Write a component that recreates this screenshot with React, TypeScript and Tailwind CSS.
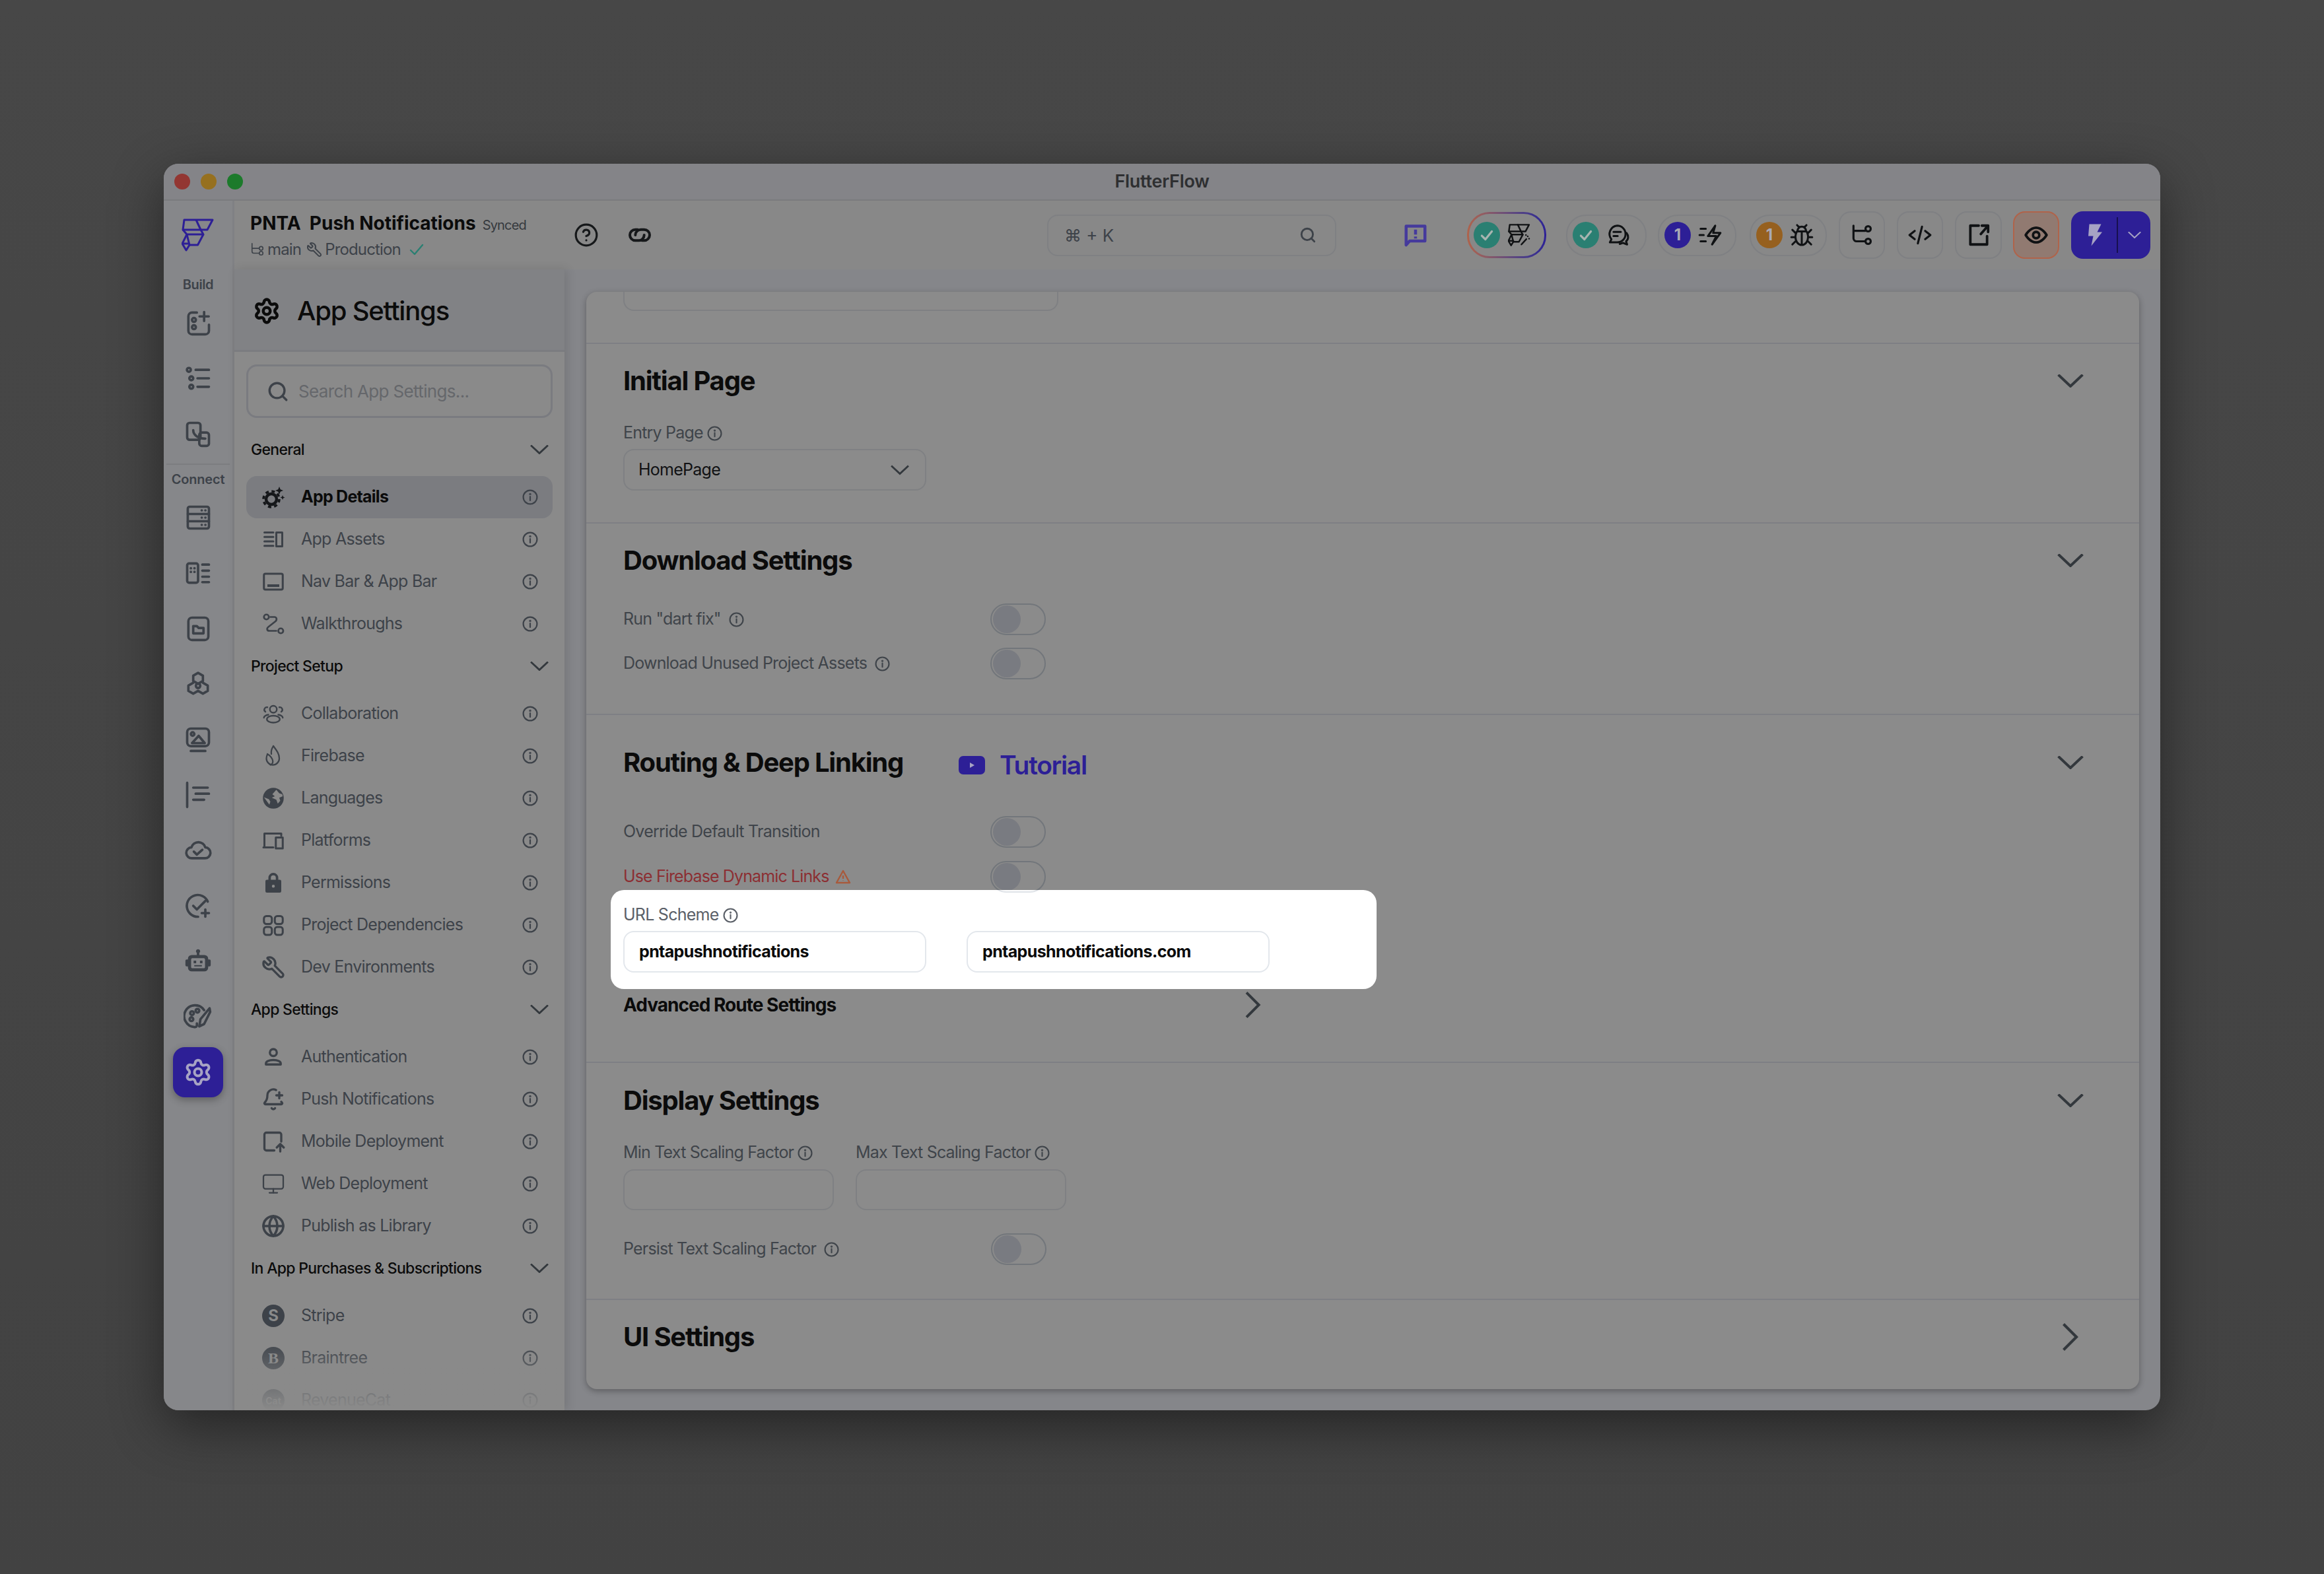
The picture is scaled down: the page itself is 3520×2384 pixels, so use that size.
import React from 'react';
import {
  BellPlus,
  CircleHelp,
  Globe,
  Monitor,
  Search,
  Settings,
  Wrench,
} from 'lucide-react';

type IconProps = { className?: string; w?: number };

const Svg = ({ className = 'w-[44px] h-[44px]', w = 2, children }: IconProps & { children: React.ReactNode }) => (
  <svg viewBox="0 0 24 24" fill="none" stroke="currentColor" strokeWidth={w} strokeLinecap="round" strokeLinejoin="round" className={className}>
    {children}
  </svg>
);

const Info = ({ className = 'w-[24px] h-[24px]' }: IconProps) => (
  <svg viewBox="0 0 24 24" fill="none" stroke="currentColor" strokeWidth={2.2} strokeLinecap="round" className={`${className} shrink-0`}>
    <circle cx="12" cy="12" r="10.4" />
    <path d="M12 11v6" />
    <circle cx="12" cy="7.4" r="0.6" fill="currentColor" />
  </svg>
);

const Caret = ({ className }: { className: string }) => (
  <svg viewBox="0 0 40 20" fill="none" stroke="currentColor" strokeWidth={4} strokeLinecap="square" className={className}>
    <path d="M3 2 20 18 37 2" />
  </svg>
);

const CaretRight = ({ className }: { className: string }) => (
  <svg viewBox="0 0 24 42" fill="none" stroke="currentColor" strokeWidth={4.2} strokeLinecap="square" className={className}>
    <path d="M3 3 21 21 3 39" />
  </svg>
);

const LogoPaths = () => (
  <>
    <path d="M4 2H47L39 17H2Z" />
    <path d="M22 2 29 17" />
    <path d="M2 17 8 24H33L29 17" />
    <path d="M33 24 24.5 40H12L8 24" />
    <path d="M8 24 1 38 7 48 12 40" />
    <path d="M1 38H12" />
  </>
);

const Logo = () => (
  <svg viewBox="0 0 50 50" fill="none" stroke="#2d1f96" strokeWidth={3} strokeLinejoin="round" className="w-[50px] h-[50px]">
    <LogoPaths />
  </svg>
);

const railTop = [
  <Svg key="a"><path d="M11 3.5H7A3 3 0 0 0 4 6.5v12a3 3 0 0 0 3 3h11a3 3 0 0 0 3-3v-5" /><circle cx="8.6" cy="9.6" r="1.6" /><circle cx="8.6" cy="15.6" r="1.6" /><path d="M17 3v7.5M13.2 6.7h7.6" /></Svg>,
  <Svg key="b"><circle cx="4.4" cy="5" r="1.6" /><circle cx="6.4" cy="12" r="1.6" /><circle cx="6.4" cy="19" r="1.6" /><path d="M10 5h11M11.5 12H21M11.5 19H21" /></Svg>,
  <Svg key="c"><rect x="3" y="3" width="11" height="14" rx="2" /><rect x="13" y="11" width="8" height="11" rx="2" /><path d="M8 9c0 4 4 7 10 7" /></Svg>,
];

const railConnect = [
  <Svg key="a"><rect x="3.5" y="3" width="17.5" height="18" rx="1.6" /><path d="M3.5 9h17.5M3.5 15h17.5M15 6h.1M18 6h.1M15 12h.1M18 12h.1M15 18h.1M18 18h.1" /></Svg>,
  <Svg key="b"><rect x="3" y="4" width="9" height="16" rx="1.6" /><path d="M6 8h.1M9 8h.1M6 11h.1M9 11h.1M15.5 5H21M15.5 10H21M15.5 15H21M15.5 19.5H21" /></Svg>,
  <Svg key="c"><rect x="4" y="3" width="16.5" height="18.5" rx="3" /><path d="M8 10h3l1.5 1.5H16.5V16H8z" /></Svg>,
  <Svg key="d"><path d="M12 2.8l4 2.3v4.4l-4 2.3-4-2.3V5.1z" /><path d="M8 11 4 13.3v4.4l4 2.3 4-2.3 4 2.3 4-2.3v-4.4L16 11" /><circle cx="12" cy="13.5" r="1.8" /></Svg>,
  <Svg key="e"><rect x="3" y="3" width="18" height="14.5" rx="3" /><circle cx="7.5" cy="7.5" r="1.4" /><path d="M7 15l5.5-6 5 6zM6 21.5h12" /></Svg>,
  <Svg key="f"><path d="M3 2v20M8 6h12M10 11h11M8 16h9" /></Svg>,
  <Svg key="g"><path d="M7 18.5a4.5 4.5 0 0 1-.5-9A6 6 0 0 1 18 9.5a4.5 4.5 0 0 1-.5 9z" /><path d="M8.5 13l2.5 2.5 4.5-4" /></Svg>,
  <Svg key="h"><path d="M20 8.5A9 9 0 1 0 12 21" /><path d="M8 12l3 3 7-7M18 15v6M15 18h6" /></Svg>,
  <svg key="i" viewBox="0 0 24 24" className="w-[46px] h-[46px]" fill="currentColor"><path fillRule="evenodd" d="M12 2.5a1.6 1.6 0 0 1 1 2.9V7h4a3 3 0 0 1 3 3v.5h1a1 1 0 0 1 1 1V15a1 1 0 0 1-1 1h-1v1a3 3 0 0 1-3 3H7a3 3 0 0 1-3-3v-1H3a1 1 0 0 1-1-1v-3.5a1 1 0 0 1 1-1h1V10a3 3 0 0 1 3-3h4V5.4a1.6 1.6 0 0 1 1-2.9zM7.5 9.5A1 1 0 0 0 6.5 10.5v6a1 1 0 0 0 1 1h9a1 1 0 0 0 1-1v-6a1 1 0 0 0-1-1zM8.5 11.5h2v2h-2zm5 0h2v2h-2zM9 15h6v1H9z" /></svg>,
  <Svg key="j"><path d="M17 6.5A9 9 0 1 0 9 20.5c2.500.5 2-2 2-3" /><circle cx="7" cy="9" r="1.5" /><circle cx="11.5" cy="7" r="1.5" /><circle cx="6.5" cy="14" r="1.5" /><path d="M21.5 5 14 14l-1 6 4-2 5-10z" /></Svg>,
];

type Item = { label: string; icon: React.ReactNode; active?: boolean };

const it = 'w-[36px] h-[36px]';

const groups: { title: string; items: Item[] }[] = [
  {
    title: 'General',
    items: [
      {
        label: 'App Details',
        active: true,
        icon: (
          <svg viewBox="0 0 36 36" className="w-[36px] h-[36px] text-[#15171a]" fill="none" stroke="currentColor">
            <circle cx="15" cy="21" r="8" strokeWidth={4.5} />
            <circle cx="15" cy="21" r="12" strokeWidth={3.6} strokeDasharray="5 4.42" />
            <path d="M27 2l1.7 4.3 4.3 1.7-4.3 1.7-1.7 4.3-1.7-4.3-4.3-1.7 4.3-1.7zM32 15l1 2.5 2.5 1-2.5 1-1 2.5-1-2.5-2.5-1 2.5-1z" fill="currentColor" stroke="none" />
          </svg>
        ),
      },
      { label: 'App Assets', icon: <Svg className={it}><path d="M3 5h9M3 9.5h9M3 14h9M3 18.5h9" /><rect x="15" y="5" width="6" height="14" /></Svg> },
      { label: 'Nav Bar & App Bar', icon: <Svg className={it}><rect x="2.5" y="4" width="19" height="16" rx="1.5" /><path d="M6 16h12" strokeWidth={2.6} strokeLinecap="butt" /></Svg> },
      { label: 'Walkthroughs', icon: <Svg className={it} w={1.8}><circle cx="5" cy="5" r="2.5" /><circle cx="19.5" cy="19" r="2.5" /><path d="M9 5h4c2.5 0 3 3 1 4.5L7 15c-2 1.5-1.5 4 1 4h7" /></Svg> },
    ],
  },
  {
    title: 'Project Setup',
    items: [
      { label: 'Collaboration', icon: <Svg className={it} w={1.6}><circle cx="12" cy="7.5" r="3.5" /><path d="M6 5.5a2.5 2.5 0 0 0-2 4.5M18 5.5a2.5 2.5 0 0 1 2 4.5M7 13c-2 .2-4.5 1.5-4.5 3M17 13c2 .2 4.5 1.5 4.5 3" /><ellipse cx="12" cy="17.5" rx="6.5" ry="3.5" /></Svg> },
      { label: 'Firebase', icon: <Svg className={it} w={1.5}><path d="M12 2c3 4 6 7.5 6 12.5a6.5 6.5 0 0 1-13 0c0-1.5.5-3 1-4" /><path d="M6 10c3 1.5 5.5 5 5.5 7.5 0 2-1 3-2.5 3.5M12 2c-2 3-2.5 5-2 8" /></Svg> },
      {
        label: 'Languages',
        icon: (
          <svg viewBox="0 0 24 24" className={it}>
            <circle cx="12" cy="12" r="10.5" fill="currentColor" />
            <path d="M2.5 11l5.5 7.500 1-3-1.500-2.500zM15 3.500l-4 4.500 2.500 2-3 1.500 4.500 2 1.500 4 2.500-3-1-3 3.500-1.500-.5-2-3-1z" fill="#8a8a8a" />
          </svg>
        ),
      },
      { label: 'Platforms', icon: <Svg className={it}><path d="M3 18V5h17v2M2 19h10" /><rect x="14.5" y="9" width="7" height="11" /></Svg> },
      { label: 'Permissions', icon: <svg viewBox="0 0 24 24" className={it} fill="currentColor"><path fillRule="evenodd" d="M7 9V7a5 5 0 0 1 10 0v2h1.5a1.5 1.5 0 0 1 1.5 1.5v10a1.5 1.5 0 0 1-1.5 1.5h-13A1.5 1.5 0 0 1 4 20.5v-10A1.5 1.5 0 0 1 5.5 9zm2.500 0h5V7a2.500 2.500 0 0 0-5 0zM12 14a1.500 1.500 0 1 0 0 3 1.500 1.500 0 0 0 0-3z" /></svg> },
      { label: 'Project Dependencies', icon: <Svg className={it}><rect x="2.5" y="3" width="8" height="8" rx="2.5" /><rect x="13.5" y="3" width="8" height="8" rx="2.5" /><rect x="2.5" y="14" width="8" height="8" rx="2.5" /><rect x="13.5" y="14" width="8" height="8" rx="2.5" /></Svg> },
      { label: 'Dev Environments', icon: <Wrench className={`${it} -scale-x-100`} strokeWidth={2.2} /> },
    ],
  },
  {
    title: 'App Settings',
    items: [
      { label: 'Authentication', icon: <Svg className={it} w={2.2}><circle cx="12" cy="7.5" r="3.5" /><path d="M4.5 19.5v-1c0-2 3-3.500 7.500-3.500s7.500 1.500 7.500 3.500v1z" /></Svg> },
      { label: 'Push Notifications', icon: <BellPlus className={it} strokeWidth={2.2} /> },
      { label: 'Mobile Deployment', icon: <Svg className={it} w={2.2}><path d="M13 21H5a2 2 0 0 1-2-2V5a2 2 0 0 1 2-2h13a2 2 0 0 1 2 2v7" /><path d="M19 22v-7M15.5 18l3.5-3.5 3.5 3.5" /></Svg> },
      { label: 'Web Deployment', icon: <Monitor className={it} strokeWidth={1.5} /> },
      { label: 'Publish as Library', icon: <Globe className={it} strokeWidth={2.4} /> },
    ],
  },
  {
    title: 'In App Purchases & Subscriptions',
    items: [
      { label: 'Stripe', icon: <span className="w-[34px] h-[34px] rounded-full bg-[#3d4249] text-[#8a8a8a] text-[24px] font-bold flex items-center justify-center">S</span> },
      { label: 'Braintree', icon: <span className="w-[34px] h-[34px] rounded-full bg-[#3d4249] text-[#8a8a8a] text-[24px] font-bold flex items-center justify-center font-[family-name:'Liberation_Serif',serif]">B</span> },
      { label: 'RevenueCat', icon: <span className="w-[34px] h-[34px] rounded-full bg-[#3d4249] text-[#8a8a8a] text-[14px] font-bold flex items-center justify-center">Cat</span> },
    ],
  },
];

const Toggle = () => (
  <div className="w-[84px] h-[48px] rounded-full border-2 border-[#72767b] flex items-center pl-[2px]">
    <div className="w-[42px] h-[42px] rounded-full bg-[#797b81]" />
  </div>
);

const Label = ({ children, gap = 'ml-[6px]' }: { children: React.ReactNode; gap?: string }) => (
  <div className="h-[30px] flex items-center text-[25px] tracking-[-0.032em] text-[#3f444a]">
    <span>{children}</span>
    <Info className={`w-[23px] h-[23px] ${gap}`} />
  </div>
);

const Heading = ({ children }: { children: React.ReactNode }) => (
  <div className="h-[48px] flex items-center text-[40px] font-bold tracking-[-0.03em] text-[#0b0b0b]">{children}</div>
);

const Section = ({ title, open = true, extra }: { title: string; open?: boolean; extra?: React.ReactNode }) => (
  <div className="flex items-center justify-between">
    <div className="flex items-center">
      <Heading>{title}</Heading>
      {extra}
    </div>
    <div className="w-[40px] flex justify-center text-[#33383d]">
      {open ? <Caret className="w-[40px] h-[20px]" /> : <CaretRight className="w-[24px] h-[42px]" />}
    </div>
  </div>
);

const Pill = ({ w, children }: { w: string; children: React.ReactNode }) => (
  <div className={`${w} h-[63px] rounded-[30px] border-2 border-[#7f8083] flex items-center pl-[8px] gap-[10px]`}>{children}</div>
);

const Badge = ({ color, children }: { color: string; children: React.ReactNode }) => (
  <div className={`${color} w-[40px] h-[40px] rounded-full flex items-center justify-center text-[24px] font-bold text-[#a9a9b5] shrink-0`}>{children}</div>
);

const Check = () => (
  <svg viewBox="0 0 24 24" fill="none" stroke="#a8b4b0" strokeWidth={3} strokeLinecap="round" strokeLinejoin="round" className="w-[26px] h-[26px]">
    <path d="M5 13l5 5 9-11" />
  </svg>
);

const SquareBtn = ({ className, children }: { className: string; children: React.ReactNode }) => (
  <div className={`${className} h-[72px] rounded-[18px] border-2 flex items-center justify-center`}>{children}</div>
);

export default function App() {
  return (
    <div className="w-[3520px] h-[2384px] overflow-hidden pl-[248px] pt-[248px] bg-linear-to-b from-[#474747] to-[#424242] font-[family-name:Inter,sans-serif]">
      <div className="w-[3024px] h-[1888px] rounded-[22px] overflow-hidden flex flex-col bg-[#85868a] shadow-[0_24px_80px_rgba(0,0,0,0.45)]">
        <div className="h-[56px] shrink-0 grid grid-cols-3 items-center bg-[#848488] border-b-2 border-[#7a7b7e]">
          <div className="flex items-center gap-[16px] pl-[16px]">
            <div className="w-[24px] h-[24px] rounded-full bg-[#933632]" />
            <div className="w-[24px] h-[24px] rounded-full bg-[#96701f]" />
            <div className="w-[24px] h-[24px] rounded-full bg-[#1c7a2b]" />
          </div>
          <div className="text-center text-[27px] font-semibold tracking-[-0.01em] text-[#2e2f31]">FlutterFlow</div>
        </div>

        <div className="flex flex-1 min-h-0">
          <div className="w-[107px] shrink-0 border-r-[3px] border-[#808184] bg-[#86878a] flex flex-col text-[#3d4249]">
            <div className="h-[104px] shrink-0 flex items-center justify-center pr-[1px]">
              <Logo />
            </div>
            <div className="h-[39px] shrink-0 pt-[10px] text-center text-[20px] leading-[26px] font-semibold tracking-[-0.02em]">Build</div>
            {railTop.map((icon, i) => (
              <div key={i} className="h-[84px] shrink-0 flex items-center justify-center">{icon}</div>
            ))}
            <div className="mt-[3px] mx-[4px] h-[2px] shrink-0 bg-[#7c7d80]" />
            <div className="h-[38px] shrink-0 pt-[9px] text-center text-[20px] leading-[26px] font-semibold tracking-[-0.01em]">Connect</div>
            {railConnect.map((icon, i) => (
              <div key={i} className="h-[84px] shrink-0 flex items-center justify-center">{icon}</div>
            ))}
            <div className="h-[84px] shrink-0 flex items-center justify-center">
              <div className="w-[76px] h-[76px] rounded-[18px] bg-[#2d1f96] flex items-center justify-center shadow-[0_4px_12px_rgba(0,0,0,0.3)]">
                <Settings className="w-[44px] h-[44px] text-[#a7a3c4]" strokeWidth={2.2} />
              </div>
            </div>
          </div>

          <div className="flex-1 min-w-0 flex flex-col">
            <div className="h-[104px] shrink-0 flex items-center bg-[#888888] pl-[24px]">
              <div className="w-[490px] shrink-0">
                <div className="flex items-baseline">
                  <span className="text-[28px] font-bold text-[#0b0b0b] whitespace-pre">PNTA  Push Notifications</span>
                  <span className="ml-[10px] text-[20px] tracking-[-0.04em] text-[#35393e]">Synced</span>
                </div>
                <div className="mt-[1px] flex items-center text-[24px] tracking-[-0.035em] text-[#3d4249]">
                  <Svg className="w-[22px] h-[26px] mr-[4px]" w={1.8}><path d="M3 2v13a3 3 0 0 0 3 3h8M3 10h11" /><circle cx="18" cy="10" r="3" /><circle cx="18" cy="18" r="3" /></Svg>
                  main
                  <Wrench className="w-[24px] h-[24px] ml-[8px] mr-[4px] -scale-x-100" strokeWidth={2} />
                  Production
                  <Svg className="w-[24px] h-[24px] ml-[12px] text-[#2a7f72]" w={2.4}><path d="M3 13l6 6L21 5" /></Svg>
                </div>
              </div>
              <CircleHelp className="w-[38px] h-[38px] text-[#16181a] shrink-0" strokeWidth={2} />
              <Svg className="w-[40px] h-[40px] ml-[42px] text-[#16181a] shrink-0" w={2.4}><path d="M10 7H8a5 5 0 0 0 0 10h3a5 5 0 0 0 5-5" /><path d="M14 17h2a5 5 0 0 0 0-10h-3a5 5 0 0 0-5 5" /></Svg>

              <div className="ml-[597px] w-[438px] h-[63px] shrink-0 rounded-[16px] border-2 border-[#7f8083] flex items-center justify-between pl-[24px] pr-[28px] text-[26px] text-[#3d4249]">
                <span>⌘ + K</span>
                <Search className="w-[26px] h-[26px]" strokeWidth={2.6} />
              </div>
              <svg viewBox="0 0 24 24" className="w-[36px] h-[36px] ml-[102px] shrink-0" fill="none" stroke="#453a9c" strokeWidth={3} strokeLinejoin="round">
                <path d="M2.5 3h19v15H6l-3.5 4z" />
                <path d="M12 6.5v5M12 13.5v2" />
              </svg>

              <div className="ml-[60px] w-[120px] h-[70px] shrink-0 rounded-[34px] p-[3px] bg-linear-to-r from-[#b0634a] to-[#2d1f96]">
                <div className="w-full h-full rounded-[31px] bg-[#888888] flex items-center pl-[7px] gap-[12px]">
                  <Badge color="bg-[#2a7f72]"><Check /></Badge>
                  <svg viewBox="0 0 50 50" fill="none" stroke="#101214" strokeWidth={3.6} strokeLinejoin="round" strokeLinecap="round" className="w-[34px] h-[34px]">
                    <LogoPaths />
                    <path d="M30 46 41 34M44 28h.1M40 25h.1M47 33h.1" />
                  </svg>
                </div>
              </div>
              <div className="ml-[30px] shrink-0">
                <Pill w="w-[122px]">
                  <Badge color="bg-[#2a7f72]"><Check /></Badge>
                  <Svg className="w-[38px] h-[38px] text-[#101214]" w={1.9}><path d="M11 3a8 8 0 0 1 0 16H4l1.5-3A8 8 0 0 1 11 3z" /><path d="M7.5 9h7M7.5 13h4" /><path d="M20 10c2 2.5 2 6-.5 8l1 3-4-1.5-3 1" /></Svg>
                </Pill>
              </div>
              <div className="ml-[17px] shrink-0">
                <Pill w="w-[119px]">
                  <Badge color="bg-[#2d1f96]">1</Badge>
                  <Svg className="w-[38px] h-[38px] text-[#101214]" w={1.9}><path d="M3 6h5M2 12h4M3 18h5M17 3l-7 10h8l-4 8 8-11h-7z" /></Svg>
                </Pill>
              </div>
              <div className="ml-[20px] shrink-0">
                <Pill w="w-[117px]">
                  <Badge color="bg-[#96601f]">1</Badge>
                  <Svg className="w-[38px] h-[38px] text-[#101214]" w={1.9}><path d="M8.5 8.5h7" /><path d="M8 8a4 4 0 0 1 8 0c1.5 1.5 2 3.5 2 6 0 4-2.500 7.500-6 7.500S6 18 6 14c0-2.500.5-4.500 2-6zM12 9v12.500M9 4 7.500 2.500M15 4l1.500-1.500M3 7l3 3M21 7l-3 3M2 14h4M18 14h4M3 21l3-3M21 21l-3-3" /></Svg>
                </Pill>
              </div>
              <SquareBtn className="ml-[18px] w-[70px] shrink-0 border-[#7f8083]">
                <Svg className="w-[38px] h-[38px] text-[#101214]" w={2}><circle cx="18" cy="6" r="2.5" /><circle cx="18" cy="18" r="2.5" /><path d="M4 3v12a3 3 0 0 0 3 3h8M4 8h11" /></Svg>
              </SquareBtn>
              <SquareBtn className="ml-[18px] w-[70px] shrink-0 border-[#7f8083]">
                <Svg className="w-[38px] h-[38px] text-[#101214]" w={2}><path d="M7 8l-5 4 5 4M17 8l5 4-5 4M14 4l-4 16" /></Svg>
              </SquareBtn>
              <SquareBtn className="ml-[18px] w-[71px] shrink-0 border-[#7f8083]">
                <Svg className="w-[38px] h-[38px] text-[#101214]" w={2.4}><path d="M12 3H4v18h16v-8M14 11l7-8M15 3h6v6" /></Svg>
              </SquareBtn>
              <SquareBtn className="ml-[17px] w-[70px] shrink-0 bg-[#917a71] border-[#b0634a]">
                <Svg className="w-[38px] h-[38px] text-[#101214]" w={2.4}><path d="M2 12s4-7 10-7 10 7 10 7-4 7-10 7-10-7-10-7z" /><circle cx="12" cy="12" r="3" /></Svg>
              </SquareBtn>
              <div className="ml-[18px] w-[120px] h-[72px] shrink-0 rounded-[18px] bg-[#2d1f96] flex items-center">
                <div className="w-[69px] flex justify-center">
                  <svg viewBox="0 0 24 24" className="w-[36px] h-[40px]" fill="#a7a3c4"><path d="M7 1h12l-4 8h5L9 23l2-10H6z" /></svg>
                </div>
                <div className="w-[2px] h-[54px] bg-[#17104f]" />
                <div className="flex-1 flex justify-center text-[#a7a3c4]">
                  <Caret className="w-[20px] h-[10px]" />
                </div>
              </div>
            </div>

            <div className="flex-1 min-h-0 flex">
              <div className="w-[500px] shrink-0 relative overflow-hidden bg-[#8a8a8a] shadow-[4px_0_14px_rgba(0,0,0,0.12)] text-[#3d4249]">
                <div className="h-[125px] flex items-center gap-[25px] pl-[28px] pt-[4px] bg-[#818285] border-b-[3px] border-[#7b7c80] text-[#0b0b0b]">
                  <Settings className="w-[42px] h-[42px]" strokeWidth={2.6} />
                  <span className="text-[40px] font-medium tracking-[-0.03em]">App Settings</span>
                </div>
                <div className="mt-[19px] mx-[18px] h-[81px] rounded-[16px] border-[3px] border-[#7a7b80] flex items-center pl-[28px] gap-[14px]">
                  <Search className="w-[34px] h-[34px]" strokeWidth={2.4} />
                  <span className="text-[26px] tracking-[-0.025em] text-[#65676b]">Search App Settings...</span>
                </div>
                <div className="mx-[18px] mt-[16px]">
                  {groups.map((g) => (
                    <div key={g.title}>
                      <div className="h-[72px] pb-[8px] pl-[7px] pr-[6px] flex items-center justify-between">
                        <span className="text-[23px] font-medium tracking-[-0.03em] text-[#0b0b0b]">{g.title}</span>
                        <Caret className="w-[28px] h-[14px] text-[#33383d]" />
                      </div>
                      {g.items.map((item) => (
                        <div key={item.label} className={`h-[64px] rounded-[16px] flex items-center pl-[23px] pr-[22px] ${item.active ? 'bg-[#7b7c80]' : ''}`}>
                          <div className="w-[36px] h-[36px] flex items-center justify-center shrink-0">{item.icon}</div>
                          <span className={`ml-[24px] flex-1 text-[25px] tracking-[-0.03em] ${item.active ? 'font-bold text-[#0b0b0b]' : ''}`}>{item.label}</span>
                          <Info />
                        </div>
                      ))}
                    </div>
                  ))}
                </div>
                <div className="absolute left-0 right-0 bottom-0 h-[110px] bg-linear-to-b from-[#8a8a8a00] to-[#8a8a8a]" />
              </div>

              <div className="flex-1 min-w-0 pl-[33px] pr-[32px] pt-[34px] pb-[32px]">
                <div className="h-full rounded-[16px] bg-[#8b8b8b] shadow-[0_3px_10px_rgba(0,0,0,0.3)]">
                  <div className="h-[77px] pl-[56px]">
                    <div className="w-[659px] h-[29px] rounded-b-[16px] border-2 border-t-0 border-[#7f8083]" />
                  </div>

                  <div className="h-[272px] border-t-2 border-[#7e7f84] pl-[56px] pr-[84px] pt-[32px]">
                    <Section title="Initial Page" />
                    <div className="mt-[40px]"><Label>Entry Page</Label></div>
                    <div className="mt-[9px] w-[459px] h-[63px] rounded-[16px] border-2 border-[#7f8083] flex items-center justify-between pl-[21px] pr-[24px]">
                      <span className="text-[25px] tracking-[-0.03em] text-[#111214]">HomePage</span>
                      <Caret className="w-[28px] h-[16px] text-[#33383d]" />
                    </div>
                  </div>

                  <div className="h-[290px] border-t-2 border-[#7e7f84] pl-[56px] pr-[84px] pt-[32px]">
                    <Section title="Download Settings" />
                    <div className="mt-[41px] flex items-center">
                      <div className="w-[556px]"><Label gap="ml-[12px]">Run "dart fix"</Label></div>
                      <Toggle />
                    </div>
                    <div className="mt-[19px] flex items-center">
                      <div className="w-[556px]"><Label gap="ml-[12px]">Download Unused Project Assets</Label></div>
                      <Toggle />
                    </div>
                  </div>

                  <div className="h-[527px] border-t-2 border-[#7e7f84] pl-[56px] pr-[84px] pt-[48px]">
                    <Section
                      title="Routing & Deep Linking"
                      extra={
                        <div className="h-[48px] flex items-center ml-[84px] pt-[8px]">
                          <svg viewBox="0 0 40 28" className="w-[40px] h-[28px]">
                            <rect width="40" height="28" rx="7" fill="#2d1f96" />
                            <path d="M17 10l7 4-7 4z" fill="#a7a3c4" />
                          </svg>
                          <span className="ml-[22px] text-[39px] font-semibold tracking-[-0.035em] text-[#2d1f96]">Tutorial</span>
                        </div>
                      }
                    />
                    <div className="mt-[57px] flex items-center">
                      <div className="w-[556px] text-[25px] tracking-[-0.03em] text-[#3f444a]">Override Default Transition</div>
                      <Toggle />
                    </div>
                    <div className="mt-[20px] flex items-center">
                      <div className="w-[556px] flex items-center text-[25px] tracking-[-0.035em] text-[#8c2f33]">
                        Use Firebase Dynamic Links
                        <svg viewBox="0 0 24 24" fill="none" stroke="#a85a3c" strokeWidth={2.4} strokeLinejoin="round" className="w-[24px] h-[24px] ml-[10px]">
                          <path d="M12 3l10 18H2z" />
                          <path d="M12 10v5M12 17.5v.5" />
                        </svg>
                      </div>
                      <Toggle />
                    </div>
                    <div className="relative -mt-[4px] -ml-[19px] w-[1160px] h-[150px] rounded-[20px] bg-white pl-[19px] pt-[23px] overflow-hidden">
                      <div className="absolute left-[575px] top-0 h-[4px] w-[84px] overflow-hidden">
                        <div className="-mt-[44px] w-[84px] h-[48px] rounded-full border-2 border-[#dfe3e8]" />
                      </div>
                      <div className="h-[30px] flex items-center text-[25px] tracking-[-0.03em] text-[#5b6068]">
                        URL Scheme
                        <Info className="w-[23px] h-[23px] ml-[6px] text-[#5b6068]" />
                      </div>
                      <div className="mt-[9px] flex gap-[61px]">
                        <div className="w-[459px] h-[63px] rounded-[16px] border-2 border-[#e3e7ec] flex items-center pl-[22px] text-[25px] font-bold tracking-[-0.025em] text-[#0b0b0b]">pntapushnotifications</div>
                        <div className="w-[459px] h-[63px] rounded-[16px] border-2 border-[#e3e7ec] flex items-center pl-[22px] text-[25px] font-bold tracking-[-0.025em] text-[#0b0b0b]">pntapushnotifications.com</div>
                      </div>
                    </div>
                    <div className="h-[48px] flex items-center justify-between w-[966px]">
                      <span className="text-[28px] font-bold tracking-[-0.035em] text-[#0b0b0b]">Advanced Route Settings</span>
                      <CaretRight className="w-[24px] h-[40px] text-[#33383d]" />
                    </div>
                  </div>

                  <div className="h-[359px] border-t-2 border-[#7e7f84] pl-[56px] pr-[84px] pt-[33px]">
                    <Section title="Display Settings" />
                    <div className="mt-[40px] flex">
                      <div className="w-[352px]"><Label>Min Text Scaling Factor</Label></div>
                      <Label>Max Text Scaling Factor</Label>
                    </div>
                    <div className="mt-[10px] flex gap-[33px]">
                      <div className="w-[319px] h-[62px] rounded-[16px] border-2 border-[#7f8083]" />
                      <div className="w-[319px] h-[62px] rounded-[16px] border-2 border-[#7f8083]" />
                    </div>
                    <div className="mt-[35px] flex items-center">
                      <div className="w-[557px]"><Label gap="ml-[12px]">Persist Text Scaling Factor</Label></div>
                      <Toggle />
                    </div>
                  </div>

                  <div className="border-t-2 border-[#7e7f84] pl-[56px] pr-[84px] pt-[32px]">
                    <Section title="UI Settings" open={false} />
                  </div>
                </div>
              </div>
            </div>
          </div>
        </div>
      </div>
    </div>
  );
}
